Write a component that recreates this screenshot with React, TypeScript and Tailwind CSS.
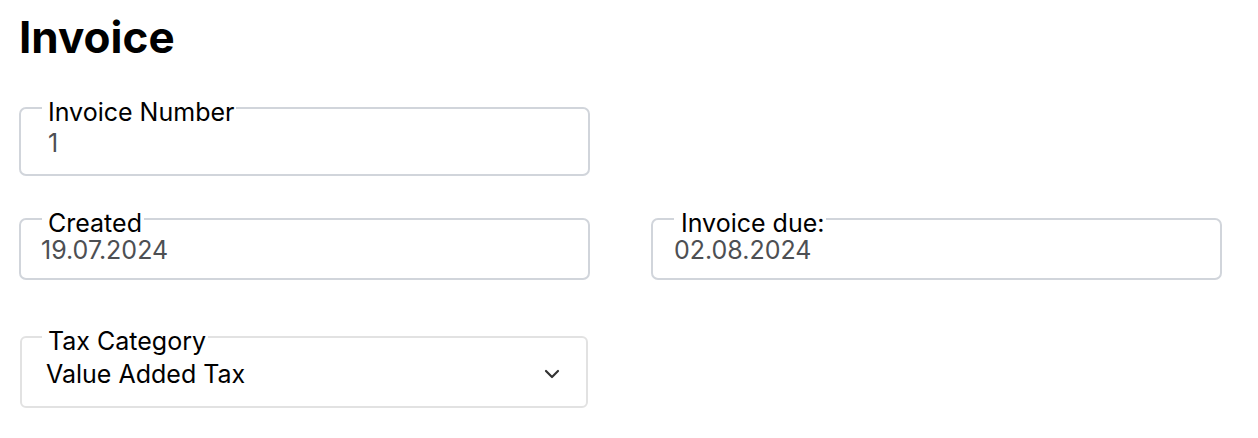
import React from "react";

const legendCls = "pt-[9px] text-[25px] leading-[24px]";

export default function App() {
  return (
    <div className="bg-white min-h-screen pt-[15px] pl-[19px] font-['Inter',sans-serif] text-black">
      <h1 className="text-[44px] font-bold leading-[44px]">Invoice</h1>

      <fieldset className="mt-[32px] w-[571px] h-[85px] border-2 border-[#d1d5db] rounded-[7px] p-0 m-0">
        <legend className={`ml-[21px] pl-[6px] pr-[2px] ${legendCls}`}>Invoice Number</legend>
        <div className="mt-[6px] pl-[27px] text-[25px] leading-[26px] text-[#4d4f53]">1</div>
      </fieldset>

      <div className="mt-[26px] flex gap-[61px]">
        <fieldset className="w-[571px] h-[78px] border-2 border-[#d1d5db] rounded-[7px] p-0 m-0">
          <legend className={`ml-[21px] pl-[6px] pr-[2px] ${legendCls}`}>Created</legend>
          <div className="mt-[3px] pl-[20px] text-[25px] leading-[25px] text-[#4d4f53]">19.07.2024</div>
        </fieldset>
        <fieldset className="w-[571px] h-[78px] border-2 border-[#d1d5db] rounded-[7px] p-0 m-0">
          <legend className={`ml-[21px] pl-[7px] pr-[2px] ${legendCls}`}>Invoice due:</legend>
          <div className="mt-[3px] pl-[21px] text-[25px] leading-[25px] text-[#4d4f53]">02.08.2024</div>
        </fieldset>
      </div>

      <fieldset className="mt-[40px] ml-[1px] w-[568px] h-[88px] border-2 border-[#e2e2e2] rounded-[6px] p-0 m-0">
        <legend className={`ml-[20px] pl-[6px] pr-[2px] ${legendCls}`}>Tax Category</legend>
        <div className="mt-[8px] flex items-center justify-between pl-[24px] pr-[26px]">
          <span className="text-[25px] leading-[26px]">Value Added Tax</span>
          <svg width="16" height="10" viewBox="0 0 16 10" fill="none">
            <path d="M2 2l6 6 6-6" stroke="#333" strokeWidth="2.2" strokeLinecap="round" strokeLinejoin="round" />
          </svg>
        </div>
      </fieldset>
    </div>
  );
}
